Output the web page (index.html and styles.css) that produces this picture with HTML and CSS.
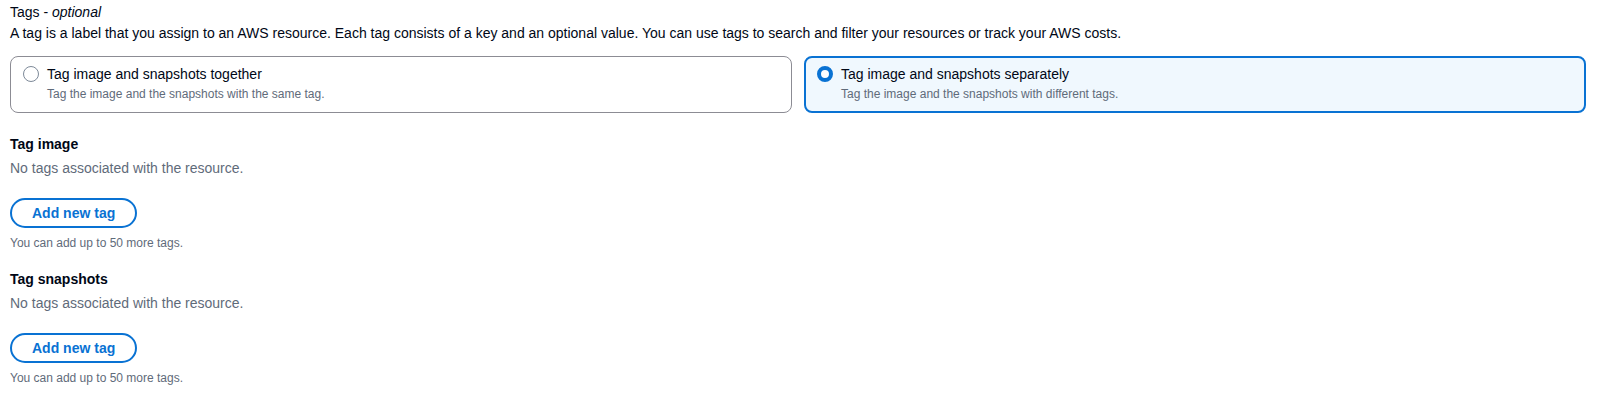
FILE: index.html
```html
<!DOCTYPE html>
<html lang="en">
<head>
<meta charset="utf-8">
<title>Tags</title>
<link rel="stylesheet" href="styles.css">
</head>
<body>
<div class="page">
  <div class="field-label">Tags - <i>optional</i></div>
  <div class="field-desc">A tag is a label that you assign to an AWS resource. Each tag consists of a key and an optional value. You can use tags to search and filter your resources or track your AWS costs.</div>

  <div class="tiles">
    <label class="tile">
      <span class="radio"></span>
      <span class="tile-text">
        <span class="tile-title">Tag image and snapshots together</span>
        <span class="tile-desc">Tag the image and the snapshots with the same tag.</span>
      </span>
    </label>
    <label class="tile selected">
      <span class="radio checked"></span>
      <span class="tile-text">
        <span class="tile-title">Tag image and snapshots separately</span>
        <span class="tile-desc">Tag the image and the snapshots with different tags.</span>
      </span>
    </label>
  </div>

  <section class="tag-section first">
    <h3 class="section-title">Tag image</h3>
    <div class="empty">No tags associated with the resource.</div>
    <button class="btn">Add new tag</button>
    <div class="hint">You can add up to 50 more tags.</div>
  </section>

  <section class="tag-section">
    <h3 class="section-title">Tag snapshots</h3>
    <div class="empty">No tags associated with the resource.</div>
    <button class="btn">Add new tag</button>
    <div class="hint">You can add up to 50 more tags.</div>
  </section>
</div>
</body>
</html>
```

FILE: styles.css
```css
* { box-sizing: border-box; }

body {
  margin: 0;
  background: #ffffff;
  font-family: "Liberation Sans", Arial, sans-serif;
  font-size: 14px;
  line-height: 20px;
  color: #000716;
}

.page {
  padding: 2px 12px 0 10px;
}

.field-label {
  color: #000716;
}

.field-label i {
  font-style: italic;
}

.field-desc {
  margin-top: 1px;
  color: #000716;
}

.tiles {
  display: grid;
  grid-template-columns: 1fr 1fr;
  gap: 12px;
  margin-top: 13px;
}

.tile {
  display: flex;
  align-items: flex-start;
  gap: 8px;
  height: 57px;
  padding: 7px 11px 0 12px;
  border: 1px solid #8c8c94;
  border-radius: 8px;
  background: #ffffff;
}

.tile.selected {
  border: 2px solid #0972d3;
  padding: 6px 10px 0 11px;
  background: #f0f8fe;
}

.radio {
  flex: none;
  width: 16px;
  height: 16px;
  margin-top: 2px;
  border-radius: 50%;
  border: 1.5px solid #7d8998;
  background: #ffffff;
}

.radio.checked {
  border: 4.5px solid #0972d3;
  background: #ffffff;
}

.tile-text {
  display: flex;
  flex-direction: column;
}

.tile-title {
  color: #000716;
  font-size: 14px;
  line-height: 20px;
}

.tile-desc {
  margin-top: 2px;
  color: #5f6b7a;
  font-size: 12px;
  line-height: 16px;
}

.tag-section {
  display: flex;
  flex-direction: column;
  align-items: flex-start;
  margin-top: 18px;
}

.tag-section.first {
  margin-top: 21px;
}

.section-title {
  margin: 0;
  font-size: 14px;
  line-height: 20px;
  font-weight: 700;
  color: #000716;
}

.empty {
  margin-top: 4px;
  color: #5f6b7a;
}

.btn {
  margin-top: 20px;
  padding: 3px 20px;
  border: 2px solid #0972d3;
  border-radius: 20px;
  background: #ffffff;
  color: #0972d3;
  font-family: inherit;
  font-size: 14px;
  line-height: 20px;
  font-weight: 700;
  cursor: pointer;
}

.hint {
  margin-top: 7px;
  color: #5f6b7a;
  font-size: 12px;
  line-height: 16px;
}
```
